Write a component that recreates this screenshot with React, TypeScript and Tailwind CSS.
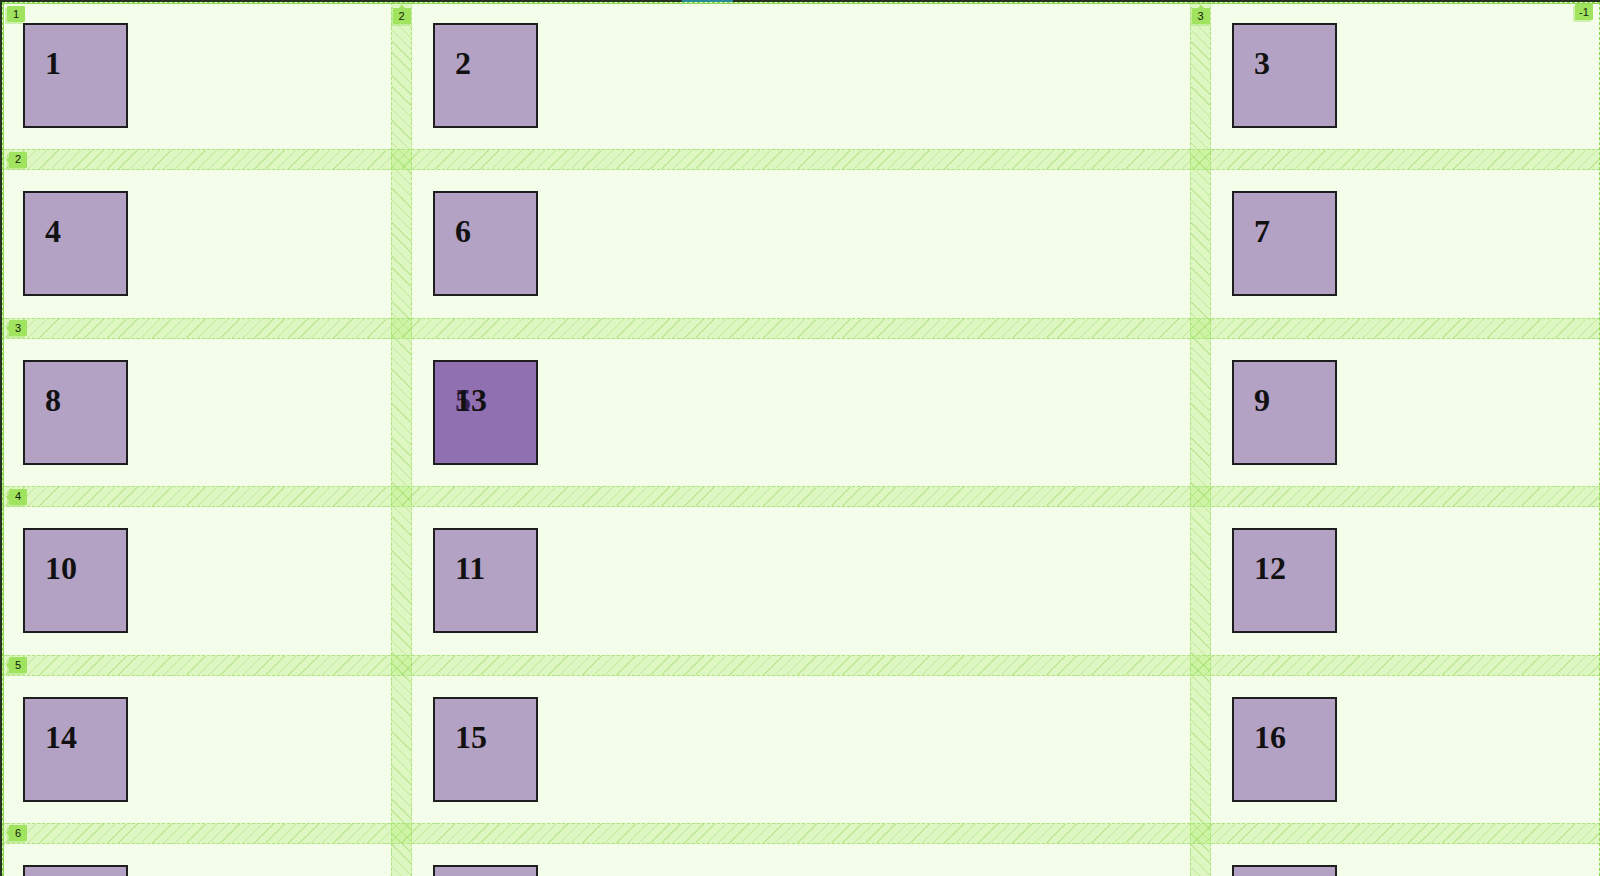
import React from 'react';

const items = Array.from({ length: 19 }, (_, i) => i + 1);
const ROWS = 6;

type LabelProps = { text: string; arrow?: 'up' | 'left' | 'none' };

const LineLabel: React.FC<LabelProps> = ({ text, arrow = 'none' }) => (
  <div
    className="relative flex h-[16px] min-w-[18px] items-center justify-center rounded-[1px] bg-[#9fe35e] px-[4px] text-[11px] leading-none text-[#14200a] shadow-[-2px_2px_0_rgba(170,228,115,0.5)]"
    style={{ fontFamily: '"Liberation Sans", Arial, sans-serif' }}
  >
    {arrow === 'up' && (
      <span className="absolute -top-[2px] left-1/2 h-[5px] w-[5px] -translate-x-1/2 rotate-45 bg-[#9fe35e]" />
    )}
    {arrow === 'left' && (
      <span className="absolute top-1/2 -left-[2px] h-[5px] w-[5px] -translate-y-1/2 rotate-45 bg-[#9fe35e]" />
    )}
    <span className="relative">{text}</span>
  </div>
);

const Box: React.FC<{ n: number; className?: string }> = ({ n, className = '' }) => (
  <div className={`p-[21px] ${className}`}>
    <div
      className="box-border h-[105px] w-[105px] border-2 border-[#1e1e1e] bg-[#663399]/45 pt-[14px] pl-[20px] text-[32px] font-bold text-[#111]"
      style={{ fontFamily: '"Liberation Serif", "Times New Roman", serif' }}
    >
      {n}
    </div>
  </div>
);

export default function App() {
  return (
    <div className="h-[876px] overflow-hidden bg-[#f4fdea]">
      <div className="relative border-t-2 border-l-2 border-[#26311f]">
        {/* highlighted segment on the top edge */}
        <div className="absolute -top-[2px] left-[680px] z-30 h-[2px] w-[51px] bg-[#2b8a99]" />

        <div className="relative grid grid-cols-[1fr_2fr_1fr] auto-rows-[147.4px] gap-[21px]">
          {items.map((n) =>
            n === 5 || n === 13 ? (
              <Box key={n} n={n} className="col-start-2 row-start-3" />
            ) : (
              <Box key={n} n={n} />
            )
          )}

          {/* grid overlay: column gaps */}
          <div className="pointer-events-none absolute inset-0 z-10 grid grid-cols-[1fr_21px_2fr_21px_1fr]">
            <div />
            <div className="flex justify-center border-x border-dashed border-[#aee47f] bg-[#9ae64a]/25 bg-[image:repeating-linear-gradient(45deg,transparent_0_7px,rgba(130,205,70,0.35)_7px_8px)] pt-[6px]">
              <LineLabel text="2" arrow="up" />
            </div>
            <div />
            <div className="flex justify-center border-x border-dashed border-[#aee47f] bg-[#9ae64a]/25 bg-[image:repeating-linear-gradient(45deg,transparent_0_7px,rgba(130,205,70,0.35)_7px_8px)] pt-[6px]">
              <LineLabel text="3" arrow="up" />
            </div>
            <div />
          </div>

          {/* grid overlay: row gaps */}
          <div className="pointer-events-none absolute inset-0 z-10 flex flex-col overflow-hidden">
            {Array.from({ length: ROWS - 1 }, (_, i) => (
              <React.Fragment key={i}>
                <div className="h-[147.4px] shrink-0" />
                <div className="flex h-[21px] shrink-0 items-center border-y border-dashed border-[#aee47f] bg-[#9ae64a]/25 bg-[image:repeating-linear-gradient(-45deg,transparent_0_7px,rgba(130,205,70,0.35)_7px_8px)] pl-[7px]">
                  <LineLabel text={String(i + 2)} arrow="left" />
                </div>
              </React.Fragment>
            ))}
          </div>

          {/* grid outline and corner labels */}
          <div className="pointer-events-none absolute inset-0 z-20 border border-dashed border-[#8bd94e]">
            <div className="absolute top-0 right-0 left-0 h-px bg-[#8bd94e]" />
            <div className="absolute top-0 bottom-0 left-0 w-px bg-[#8bd94e]" />
            <div className="absolute top-[3px] left-[4px]">
              <LineLabel text="1" />
            </div>
            <div className="absolute top-[1px] right-[6px]">
              <LineLabel text="-1" />
            </div>
          </div>
        </div>
      </div>
    </div>
  );
}
